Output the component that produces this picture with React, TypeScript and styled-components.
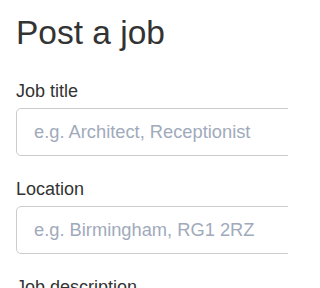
import React from 'react'
import styled, { createGlobalStyle } from 'styled-components'

const GlobalStyle = createGlobalStyle`
  html, body {
    margin: 0;
    padding: 0;
    background: #ffffff;
  }
  body {
    font-family: "Liberation Sans", Arial, sans-serif;
    color: #333333;
  }
`

interface FieldProps {
  label: string
  placeholder: string
}

function Field(props: FieldProps) {
  const { label, placeholder } = props

  return (
    <Styled.Field>
      <Styled.Label>{label}</Styled.Label>
      <Styled.Input placeholder={placeholder} />
    </Styled.Field>
  )
}

export default function App() {
  return (
    <>
      <GlobalStyle />
      <Styled.Root>
        <Styled.Form>
          <Styled.Title>Post a job</Styled.Title>
          <Field label="Job title" placeholder="e.g. Architect, Receptionist" />
          <Field label="Location" placeholder="e.g. Birmingham, RG1 2RZ" />
          <Styled.Label>Job description</Styled.Label>
        </Styled.Form>
      </Styled.Root>
    </>
  )
}

const Styled = {
  Root: styled.div`
    width: 288px;
    height: 288px;
    overflow: hidden;
  `,
  Form: styled.form`
    display: flex;
    flex-direction: column;
    width: 340px;
    padding: 13px 0 0 16px;
  `,
  Title: styled.h1`
    margin: 0 0 27px;
    font-size: 33.5px;
    font-weight: 400;
    line-height: 40px;
    color: #333333;
  `,
  Field: styled.div`
    display: flex;
    flex-direction: column;
    margin-bottom: 22px;
  `,
  Label: styled.label`
    font-size: 18px;
    line-height: 22px;
    margin-bottom: 6px;
    color: #333333;
  `,
  Input: styled.input`
    box-sizing: border-box;
    width: 100%;
    height: 48px;
    padding: 0 17px;
    border: 1px solid #cccccc;
    border-radius: 5px;
    background: #ffffff;
    font-family: "Liberation Sans", Arial, sans-serif;
    font-size: 18.3px;
    color: #333333;
    outline: none;

    &::placeholder {
      color: #a0aabb;
    }
  `,
}
